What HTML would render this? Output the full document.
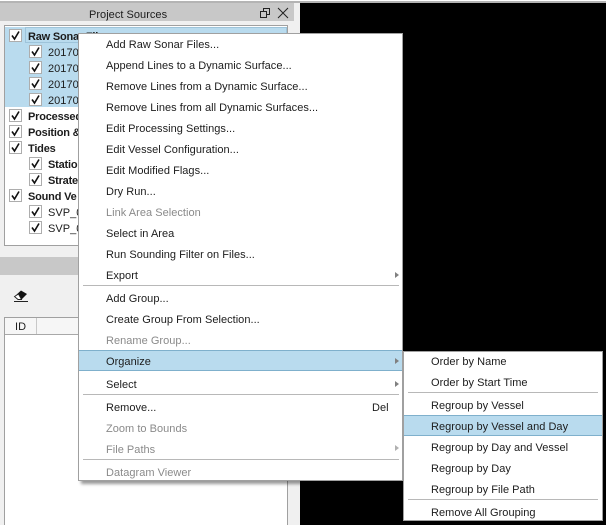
<!DOCTYPE html>
<html><head><meta charset="utf-8">
<style>
html,body{margin:0;padding:0}
body{width:606px;height:525px;position:relative;overflow:hidden;background:#f0f0f0;font-family:"Liberation Sans",sans-serif;font-size:11px;color:#1c1c1c}
.a{position:absolute}
.t{position:absolute;white-space:nowrap;line-height:14px;letter-spacing:.03px}
.b{font-weight:bold;letter-spacing:-.2px}
.d{color:#8a8a8a}
.c{position:absolute;width:11px;height:11px;border:1px solid #adadad;background:#fff}
.c svg{position:absolute;left:0;top:0}
.s{position:absolute;height:1px;background:#b8b8b8}
.h{position:absolute;background:#b9dbee;border-top:1px solid #7fb0cc;border-bottom:1px solid #7fb0cc;box-sizing:border-box}
.ar{position:absolute;width:0;height:0;border-left:4px solid #808080;border-top:3px solid transparent;border-bottom:3px solid transparent}
</style></head>
<body>
<div class="a" style="left:0;top:0;width:606px;height:1px;background:#fff"></div>
<div class="a" style="left:0;top:1px;width:606px;height:2px;background:#b4b4b4"></div>
<div class="a" style="left:300px;top:3px;width:306px;height:522px;background:#000"></div>
<div class="a" style="left:0;top:3px;width:294px;height:18px;background:#c8c8c8"></div>
<div class="t" style="left:89px;top:8px">Project Sources</div>
<svg class="a" style="left:258px;top:6px" width="32" height="14" viewBox="0 0 32 14" fill="none" stroke="#222" stroke-width="1">
<path d="M2.5 5.500h6v6h-6zM5.500 5.500v-3h6v6h-3"/><path d="M20 2l10 10M30 2L20 12"/></svg>

<div class="a" style="left:4px;top:25px;width:282px;height:219px;background:#fff;border:1px solid #a0a0a0"></div>
<div class="a" style="left:5px;top:27px;width:282px;height:80px;background:#b9dbee"></div>
<div class="a" style="left:25px;top:27px;width:262px;height:16px;border:1px solid #9ec4da;box-sizing:border-box"></div>

<div class="c" style="left:9px;top:29px"><svg width="11" height="11"><path d="M2 5.500l2.500 3.500L9 1.500" fill="none" stroke="#111" stroke-width="1.6"/></svg></div>
<div class="t b" style="left:28px;top:30px">Raw Sonar Files</div>
<div class="c" style="left:29px;top:45px"><svg width="11" height="11"><path d="M2 5.500l2.500 3.500L9 1.500" fill="none" stroke="#111" stroke-width="1.6"/></svg></div>
<div class="t" style="left:48px;top:46px">20170</div>
<div class="c" style="left:29px;top:61px"><svg width="11" height="11"><path d="M2 5.500l2.500 3.500L9 1.500" fill="none" stroke="#111" stroke-width="1.6"/></svg></div>
<div class="t" style="left:48px;top:62px">20170</div>
<div class="c" style="left:29px;top:77px"><svg width="11" height="11"><path d="M2 5.500l2.500 3.500L9 1.500" fill="none" stroke="#111" stroke-width="1.6"/></svg></div>
<div class="t" style="left:48px;top:78px">20170</div>
<div class="c" style="left:29px;top:93px"><svg width="11" height="11"><path d="M2 5.500l2.500 3.500L9 1.500" fill="none" stroke="#111" stroke-width="1.6"/></svg></div>
<div class="t" style="left:48px;top:94px">20170</div>
<div class="c" style="left:9px;top:109px"><svg width="11" height="11"><path d="M2 5.500l2.500 3.500L9 1.500" fill="none" stroke="#111" stroke-width="1.6"/></svg></div>
<div class="t b" style="left:28px;top:110px">Processed</div>
<div class="c" style="left:9px;top:125px"><svg width="11" height="11"><path d="M2 5.500l2.500 3.500L9 1.500" fill="none" stroke="#111" stroke-width="1.6"/></svg></div>
<div class="t b" style="left:28px;top:126px">Position &amp;</div>
<div class="c" style="left:9px;top:141px"><svg width="11" height="11"><path d="M2 5.500l2.500 3.500L9 1.500" fill="none" stroke="#111" stroke-width="1.6"/></svg></div>
<div class="t b" style="left:28px;top:142px">Tides</div>
<div class="c" style="left:29px;top:157px"><svg width="11" height="11"><path d="M2 5.500l2.500 3.500L9 1.500" fill="none" stroke="#111" stroke-width="1.6"/></svg></div>
<div class="t b" style="left:48px;top:158px">Statio</div>
<div class="c" style="left:29px;top:173px"><svg width="11" height="11"><path d="M2 5.500l2.500 3.500L9 1.500" fill="none" stroke="#111" stroke-width="1.6"/></svg></div>
<div class="t b" style="left:48px;top:174px">Strate</div>
<div class="c" style="left:9px;top:189px"><svg width="11" height="11"><path d="M2 5.500l2.500 3.500L9 1.500" fill="none" stroke="#111" stroke-width="1.6"/></svg></div>
<div class="t b" style="left:28px;top:190px">Sound Ve</div>
<div class="c" style="left:29px;top:205px"><svg width="11" height="11"><path d="M2 5.500l2.500 3.500L9 1.500" fill="none" stroke="#111" stroke-width="1.6"/></svg></div>
<div class="t" style="left:48px;top:206px">SVP_0</div>
<div class="c" style="left:29px;top:221px"><svg width="11" height="11"><path d="M2 5.500l2.500 3.500L9 1.500" fill="none" stroke="#111" stroke-width="1.6"/></svg></div>
<div class="t" style="left:48px;top:222px">SVP_0</div>

<div class="a" style="left:0;top:257px;width:300px;height:18px;background:#c8c8c8"></div>
<div class="a" style="left:78px;top:275px;width:222px;height:250px;background:#f0f0f0"></div>
<svg class="a" style="left:13px;top:289px" width="16" height="14" viewBox="0 0 16 14">
<path d="M2 7L8 1.500l6 3.500-5.500 5.500H5z" fill="#111"/><path d="M1.500 7.500l3.500 3h3.500L5.500 5z" fill="#fff" stroke="#222" stroke-width=".9"/><path d="M1 12.500h14" stroke="#222"/></svg>
<div class="a" style="left:4px;top:317px;width:284px;height:208px;background:#fff;border-left:1px solid #a0a0a0;border-top:1px solid #a0a0a0;border-right:1px solid #a0a0a0;box-sizing:border-box"></div>
<div class="a" style="left:5px;top:318px;width:282px;height:16px;background:#f6f6f6;border-bottom:1px solid #a8a8a8"></div>
<div class="a" style="left:36px;top:318px;width:1px;height:16px;background:#c8c8c8"></div>
<div class="t" style="left:15px;top:320px">ID</div>

<!-- main menu -->
<div class="a" style="left:78px;top:33px;width:325px;height:448px;background:#fff;border:1px solid #a0a0a0;box-sizing:border-box;box-shadow:3px 3px 3px rgba(0,0,0,.4)"></div>
<div class="s" style="left:83px;top:285px;width:316px"></div>
<div class="h" style="left:79px;top:350px;width:323px;height:21px"></div>
<div class="s" style="left:83px;top:394px;width:316px"></div>
<div class="s" style="left:83px;top:459px;width:316px"></div>
<div class="t" style="left:106px;top:38px">Add Raw Sonar Files...</div>
<div class="t" style="left:106px;top:59px">Append Lines to a Dynamic Surface...</div>
<div class="t" style="left:106px;top:80px">Remove Lines from a Dynamic Surface...</div>
<div class="t" style="left:106px;top:101px">Remove Lines from all Dynamic Surfaces...</div>
<div class="t" style="left:106px;top:122px">Edit Processing Settings...</div>
<div class="t" style="left:106px;top:143px">Edit Vessel Configuration...</div>
<div class="t" style="left:106px;top:164px">Edit Modified Flags...</div>
<div class="t" style="left:106px;top:185px">Dry Run...</div>
<div class="t d" style="left:106px;top:206px">Link Area Selection</div>
<div class="t" style="left:106px;top:227px">Select in Area</div>
<div class="t" style="left:106px;top:248px">Run Sounding Filter on Files...</div>
<div class="t" style="left:106px;top:269px">Export</div>
<div class="t" style="left:106px;top:292px">Add Group...</div>
<div class="t" style="left:106px;top:313px">Create Group From Selection...</div>
<div class="t d" style="left:106px;top:334px">Rename Group...</div>
<div class="t" style="left:106px;top:355px">Organize</div>
<div class="t" style="left:106px;top:378px">Select</div>
<div class="t" style="left:106px;top:401px">Remove...</div>
<div class="t" style="left:372px;top:401px">Del</div>
<div class="t d" style="left:106px;top:422px">Zoom to Bounds</div>
<div class="t d" style="left:106px;top:443px">File Paths</div>
<div class="t d" style="left:106px;top:466px">Datagram Viewer</div>
<div class="ar" style="left:395px;top:272px"></div>
<div class="ar" style="left:395px;top:358px"></div>
<div class="ar" style="left:395px;top:381px"></div>
<div class="ar" style="left:395px;top:445px;border-left-color:#b0b0b0"></div>

<!-- submenu -->
<div class="a" style="left:403px;top:351px;width:200px;height:170px;background:#fff;border:1px solid #a0a0a0;box-sizing:border-box"></div>
<div class="s" style="left:408px;top:392px;width:190px"></div>
<div class="h" style="left:404px;top:415px;width:198px;height:21px"></div>
<div class="s" style="left:408px;top:499px;width:190px"></div>
<div class="t" style="left:431px;top:355px">Order by Name</div>
<div class="t" style="left:431px;top:376px">Order by Start Time</div>
<div class="t" style="left:431px;top:399px">Regroup by Vessel</div>
<div class="t" style="left:431px;top:420px">Regroup by Vessel and Day</div>
<div class="t" style="left:431px;top:441px">Regroup by Day and Vessel</div>
<div class="t" style="left:431px;top:462px">Regroup by Day</div>
<div class="t" style="left:431px;top:483px">Regroup by File Path</div>
<div class="t" style="left:431px;top:506px">Remove All Grouping</div>
</body></html>
